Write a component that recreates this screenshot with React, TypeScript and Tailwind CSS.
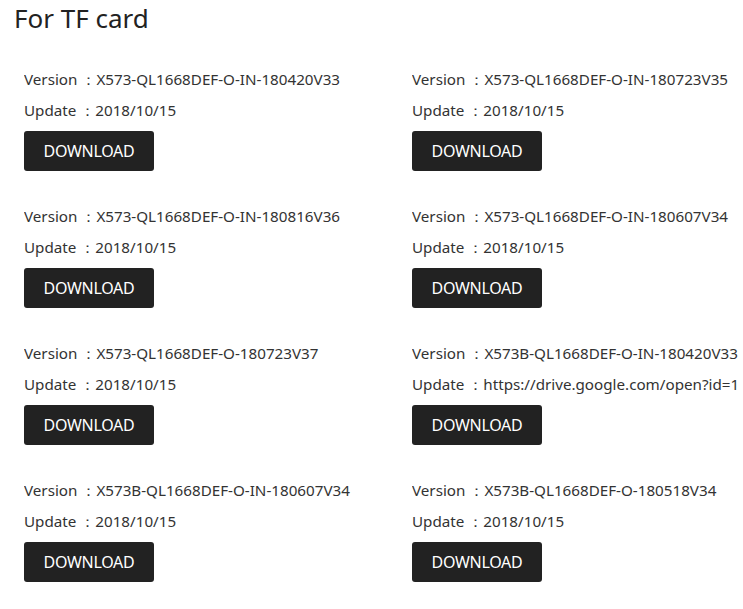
import React from "react";

const items = [
  { version: "X573-QL1668DEF-O-IN-180420V33", update: "2018/10/15" },
  { version: "X573-QL1668DEF-O-IN-180723V35", update: "2018/10/15" },
  { version: "X573-QL1668DEF-O-IN-180816V36", update: "2018/10/15" },
  { version: "X573-QL1668DEF-O-IN-180607V34", update: "2018/10/15" },
  { version: "X573-QL1668DEF-O-180723V37", update: "2018/10/15" },
  { version: "X573B-QL1668DEF-O-IN-180420V33", update: "https://drive.google.com/open?id=1" },
  { version: "X573B-QL1668DEF-O-IN-180607V34", update: "2018/10/15" },
  { version: "X573B-QL1668DEF-O-180518V34", update: "2018/10/15" },
];

const App = () => {
  return (
    <div
      className="w-[743px] h-[609px] overflow-hidden bg-white text-[#333]"
      style={{ fontFamily: '"Noto Sans", "Open Sans", sans-serif' }}
    >
      <h1 className="pl-[14px] pt-[1px] text-[26px] leading-[34px] text-[#222] font-normal">
        For TF card
      </h1>
      <div className="grid grid-cols-[388px_355px] pl-[24px] pt-[29px]">
        {items.map((item, i) => (
          <div key={i} className="h-[137px] overflow-hidden">
            <p className="text-[15.2px] leading-[31px] whitespace-nowrap">
              Version ：{item.version}
            </p>
            <p className="text-[15.2px] leading-[31px] whitespace-nowrap">
              Update ：{item.update}
            </p>
            <button className="mt-[5px] w-[130px] h-[40px] rounded-[3px] bg-[#222] text-white text-[16px] tracking-[-0.3px]">
              DOWNLOAD
            </button>
          </div>
        ))}
      </div>
    </div>
  );
};

export default App;
